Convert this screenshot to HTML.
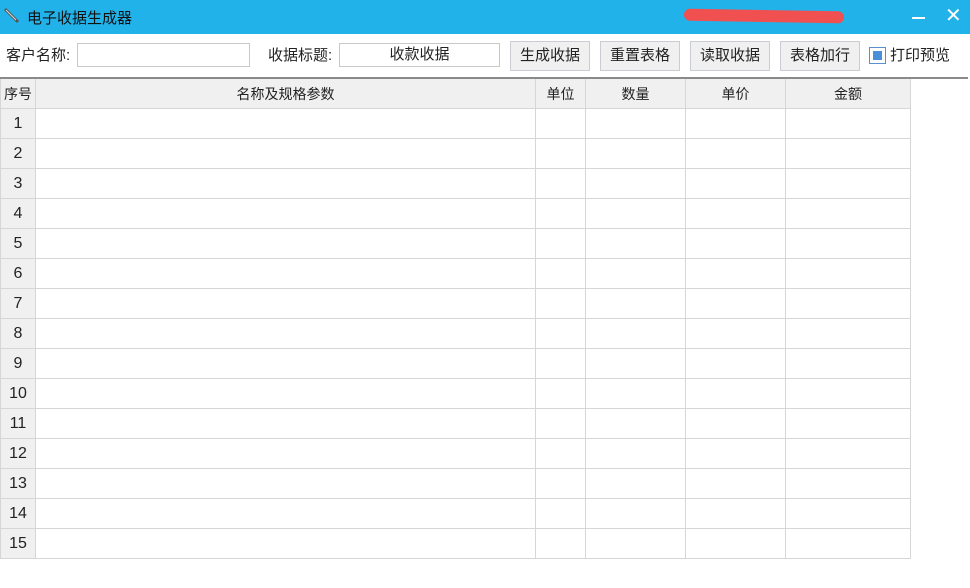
<!DOCTYPE html>
<html><head><meta charset="utf-8"><style>
body{margin:0;width:970px;height:588px;background:#fff;font-family:"Liberation Sans","Noto Sans CJK SC",sans-serif;position:relative;overflow:hidden;font-size:15px;color:#222}
.a{position:absolute}
.title{left:0;top:0;width:970px;height:34px;background:#22b2ea}
.inp{background:#fff;border:1px solid #c8c8c8;height:24px;box-sizing:border-box;text-align:center;line-height:22px}
.btn{background:#f0f0f0;border:1px solid #c9cdd2;height:30px;box-sizing:border-box;text-align:center;line-height:28px;width:80px}
.c{position:absolute;box-sizing:border-box;border-right:1px solid #d6d6d6;border-bottom:1px solid #d6d6d6;text-align:center}
.h{background:#f0f0f0}
</style></head><body>
<div class="a title"></div>
<svg class="a" style="left:3px;top:7px" width="18" height="18"><line x1="2" y1="2" x2="15" y2="15" stroke="#555" stroke-width="3"/><line x1="3" y1="3" x2="13" y2="13" stroke="#ddd" stroke-width="1"/></svg>
<div class="a" style="left:27px;top:7px;color:#111;font-size:15px">电子收据生成器</div>
<div class="a" style="left:684px;top:10px;width:160px;height:12px;background:#f05050;border-radius:6px;transform:rotate(1deg)"></div>
<div class="a" style="left:912px;top:17px;width:13px;height:2px;background:#fff"></div>
<div class="a" style="left:945px;top:3px;color:#fff;font-size:20px">✕</div>
<div class="a" style="left:6px;top:44px">客户名称:</div>
<div class="a inp" style="left:77px;top:43px;width:173px"></div>
<div class="a" style="left:268px;top:44px">收据标题:</div>
<div class="a inp" style="left:339px;top:43px;width:161px">收款收据</div>
<div class="a btn" style="left:510px;top:41px">生成收据</div>
<div class="a btn" style="left:600px;top:41px">重置表格</div>
<div class="a btn" style="left:690px;top:41px">读取收据</div>
<div class="a btn" style="left:780px;top:41px">表格加行</div>
<div class="a" style="left:869px;top:47px;width:17px;height:17px;border:1px solid #5a8fd0;box-sizing:border-box;background:#fff"><div style="margin:3px;width:9px;height:9px;background:#4a90d8"></div></div>
<div class="a" style="left:890px;top:44px">打印预览</div>
<div class="a" style="left:0;top:77px;width:968px;height:2px;background:#8a8a8a"></div>
<div class="a" style="left:0;top:79px;width:1px;height:480px;background:#d6d6d6"></div>
<div id="t"></div>
<script>
var xs=[1,36,536,586,686,786,911],hd=["序号","名称及规格参数","单位","数量","单价","金额"],s="";
for(var r=0;r<16;r++){var y=79+r*30;for(var c=0;c<6;c++){var h=(r==0||c==0)?" h":"";var t=r==0?hd[c]:(c==0?r:"");
s+='<div class="c'+h+'" style="left:'+xs[c]+'px;top:'+y+'px;width:'+(xs[c+1]-xs[c])+'px;height:30px;line-height:30px;font-size:'+(r==0?14:16)+'px">'+t+'</div>';}}
document.getElementById("t").innerHTML=s;
</script>
</body></html>
